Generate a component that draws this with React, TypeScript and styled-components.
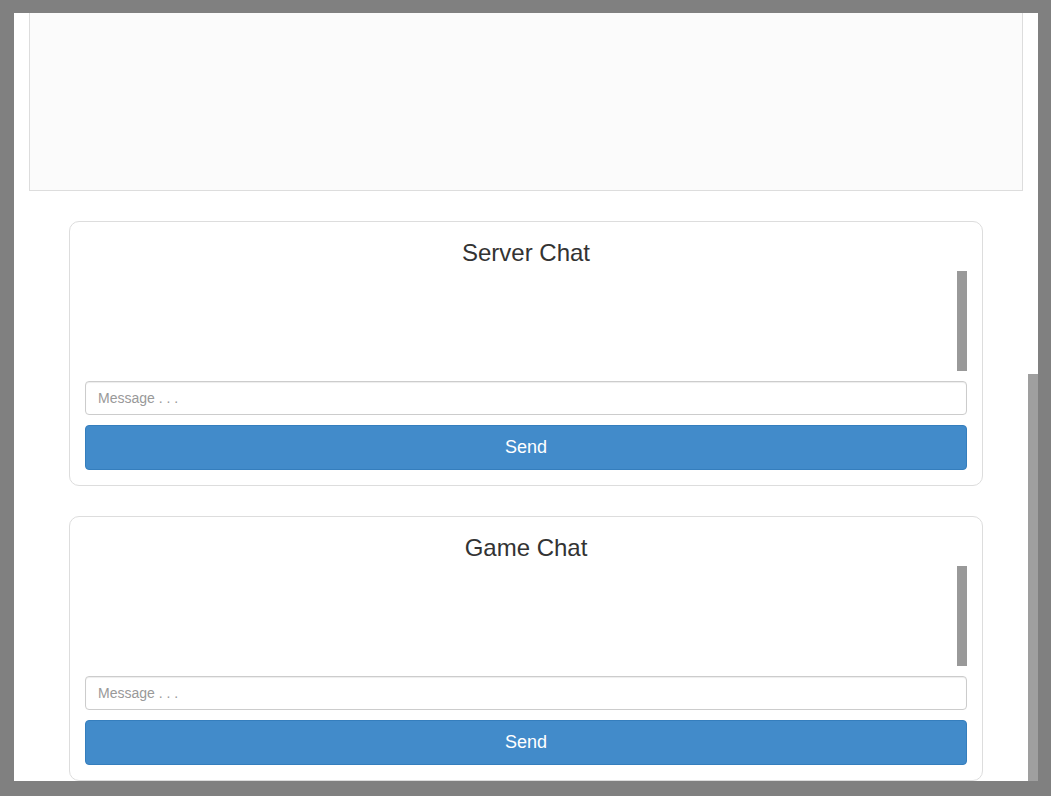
import styled, { createGlobalStyle } from 'styled-components';

const GlobalStyle = createGlobalStyle`
  html, body {
    margin: 0;
    padding: 0;
    background: #808080;
    font-family: "Liberation Sans", Arial, sans-serif;
    color: #333;
  }
  * {
    box-sizing: border-box;
  }
`;

const Frame = styled.div`
  width: 1051px;
  height: 796px;
  padding: 13px 13px 15px 14px;
`;

const Viewport = styled.div`
  position: relative;
  width: 1024px;
  height: 768px;
  background: #fff;
  overflow: hidden;
`;

const Page = styled.div`
  display: flex;
  flex-direction: column;
  align-items: center;
  gap: 30px;
  padding: 0 15px;
`;

const Canvas = styled.div`
  align-self: stretch;
  height: 178px;
  background: #fbfbfb;
  border: 1px solid #ddd;
  border-top: none;
`;

const ScrollTrack = styled.div`
  position: absolute;
  top: 0;
  right: 0;
  bottom: 0;
  width: 10px;
  display: flex;
  flex-direction: column;
`;

const ScrollThumb = styled.div`
  margin-top: 361px;
  flex: 1;
  background: #9f9f9f;
`;

const Card = styled.section`
  width: 914px;
  display: flex;
  flex-direction: column;
  padding: 0 15px 15px;
  border: 1px solid #ddd;
  border-radius: 10px;
  background: #fff;
  flex-shrink: 0;
`;

const Title = styled.h3`
  margin: 18px 0 5px;
  font-size: 24px;
  font-weight: 400;
  line-height: 26px;
  text-align: center;
  color: #333;
`;

const Messages = styled.div`
  height: 100px;
  display: flex;
  justify-content: flex-end;
`;

const Thumb = styled.div`
  width: 10px;
  height: 100px;
  background: #999;
`;

const Input = styled.input`
  margin-top: 10px;
  height: 34px;
  padding: 6px 12px;
  font-family: "Liberation Sans", Arial, sans-serif;
  font-size: 14px;
  color: #555;
  border: 1px solid #ccc;
  border-radius: 4px;
  box-shadow: inset 0 1px 1px rgba(0, 0, 0, 0.075);
  outline: none;

  &::placeholder {
    color: #999;
  }
`;

const SendButton = styled.button`
  margin-top: 10px;
  height: 45px;
  font-family: "Liberation Sans", Arial, sans-serif;
  font-size: 18px;
  color: #fff;
  background: #428bca;
  border: 1px solid #357ebd;
  border-radius: 4px;
  cursor: pointer;
`;

function ChatBox({ title }: { title: string }) {
  return (
    <Card>
      <Title>{title}</Title>
      <Messages>
        <Thumb />
      </Messages>
      <Input type="text" placeholder="Message . . ." />
      <SendButton type="button">Send</SendButton>
    </Card>
  );
}

export default function App() {
  return (
    <>
      <GlobalStyle />
      <Frame>
        <Viewport>
          <Page>
            <Canvas />
            <ChatBox title="Server Chat" />
            <ChatBox title="Game Chat" />
          </Page>
          <ScrollTrack>
            <ScrollThumb />
          </ScrollTrack>
        </Viewport>
      </Frame>
    </>
  );
}
